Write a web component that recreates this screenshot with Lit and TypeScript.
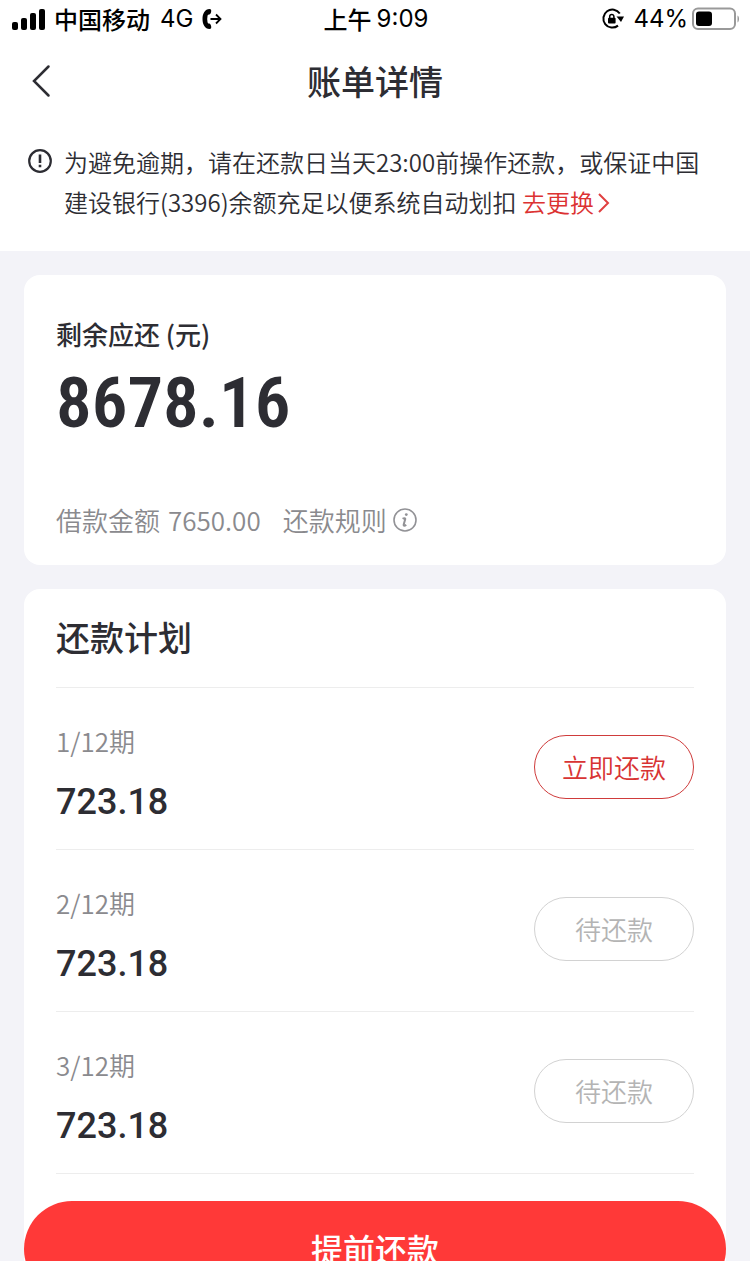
import { LitElement, html, css } from "lit";
import { customElement, property, state } from "lit/decorators.js";
import { classMap } from "lit/directives/class-map.js";

interface Installment {
  label: string;
  amount: string;
  due: boolean;
}

@customElement("status-bar")
class StatusBar extends LitElement {
  static styles = css`
    :host {
      display: block;
      color: #000;
      font-size: 24px;
      line-height: 36px;
    }
    .bar {
      display: grid;
      grid-template-columns: 1fr auto 1fr;
      align-items: center;
      height: 38px;
      padding: 0 10px 0 12px;
    }
    .side {
      display: flex;
      align-items: center;
      gap: 8px;
    }
    .carrier {
      display: flex;
      gap: 10px;
    }
    .end {
      justify-content: flex-end;
    }
    .latin {
      font-family: Inter, "Noto Sans CJK SC", sans-serif;
    }
    .strong {
      font-weight: 500;
    }
    .time {
      display: flex;
      gap: 5px;
    }
    svg {
      display: block;
      flex: none;
    }
    .battery {
      display: flex;
      align-items: center;
      gap: 4px;
    }
  `;

  render() {
    return html`
      <div class="bar">
        <div class="side">
          <svg width="34" height="22" viewBox="0 0 34 22" aria-hidden="true">
            <rect x="0" y="14" width="6" height="8" rx="2" />
            <rect x="9" y="10" width="6" height="12" rx="2" />
            <rect x="18" y="5" width="6" height="17" rx="2" />
            <rect x="27" y="1" width="6" height="21" rx="2" />
          </svg>
          <div class="carrier">
            <span class="strong">中国移动</span>
            <span class="latin">4G</span>
          </div>
          <svg width="22" height="24" viewBox="0 0 22 24" aria-hidden="true">
            <path d="M8.500 2C4 2 1.500 6.500 1.500 12s2.500 10 7 10c1.600 0 2-1.200 1.600-3C9.700 17.300 9 16.300 8 16.500c-1.200 0-1.300-.8-1.500-1.600-.4-2-.4-3.800 0-5.800C6.700 8.300 6.800 7.500 8 7.500c1 .2 1.700-.8 2.100-2.500.4-1.800 0-3-1.600-3z" />
            <path d="M9.500 12h10M15 7.500l4.500 4.500-4.500 4.500" fill="none" stroke="#000" stroke-width="1.800" />
          </svg>
        </div>
        <div class="time">
          <span class="strong">上午</span>
          <span class="latin">9:09</span>
        </div>
        <div class="side end">
          <svg width="24" height="24" viewBox="0 0 24 24" aria-hidden="true">
            <path d="M18.800 6.500A9 9 0 1 0 17 18.600" fill="none" stroke="#000" stroke-width="2" />
            <path d="M15.500 9.500H23l-3 5.500z" />
            <rect x="7" y="10.800" width="7.600" height="5.800" rx="1" />
            <path d="M8.700 11.500V9.500a2.100 2.100 0 0 1 4.200 0v2" fill="none" stroke="#000" stroke-width="1.500" />
          </svg>
          <div class="battery">
            <span class="latin">44%</span>
            <svg width="48" height="24" viewBox="0 0 48 24" aria-hidden="true">
              <rect x="1" y="1.500" width="42" height="20.500" rx="5" fill="none" stroke="#999" stroke-width="2" />
              <rect x="4" y="4.500" width="16" height="14.500" rx="3" />
              <path d="M45.500 8.500c2 .8 2 6 0 7z" fill="#999" />
            </svg>
          </div>
        </div>
      </div>
    `;
  }
}

@customElement("plan-row")
class PlanRow extends LitElement {
  @property({ attribute: false }) item!: Installment;

  static styles = css`
    :host {
      display: block;
      border-bottom: 1px solid #ededed;
    }
    .row {
      display: flex;
      justify-content: space-between;
      align-items: flex-start;
      padding: 36px 0 25px;
    }
    .info {
      display: grid;
      gap: 20px;
    }
    .label {
      color: #8a8a8e;
      font-size: 26px;
      font-weight: 350;
      line-height: 34px;
    }
    .amount {
      padding-top: 2px;
      color: #2d2d33;
      font-size: 36px;
      font-weight: 500;
      line-height: 44px;
      font-family: Roboto, sans-serif;
    }
    .action {
      box-sizing: border-box;
      width: 160px;
      height: 64px;
      margin: 11px 0 0;
      padding: 0 0 2px;
      border: 1px solid #d2d2d2;
      border-radius: 32px;
      background: #fff;
      color: #b4b4b4;
      font: inherit;
      font-size: 26px;
      font-weight: 350;
    }
    .due {
      border-color: #cf3b3b;
      color: #d83434;
    }
  `;

  render() {
    const { label, amount, due } = this.item;
    return html`
      <div class="row">
        <div class="info">
          <span class="label">${label}</span>
          <span class="amount">${amount}</span>
        </div>
        <button class=${classMap({ action: true, due })} type="button" ?disabled=${!due}>
          ${due ? "立即还款" : "待还款"}
        </button>
      </div>
    `;
  }
}

@customElement("app-root")
class AppRoot extends LitElement {
  @state() private plan: Installment[] = [
    { label: "1/12期", amount: "723.18", due: true },
    { label: "2/12期", amount: "723.18", due: false },
    { label: "3/12期", amount: "723.18", due: false },
  ];

  static styles = css`
    :host {
      display: block;
      height: 100vh;
      overflow-y: auto;
      scrollbar-width: none;
      background: #f3f3f8;
      color: #2d2d33;
      font-family: "Noto Sans CJK SC", sans-serif;
    }
    h1,
    h2,
    p {
      margin: 0;
    }
    svg {
      display: block;
      flex: none;
    }
    .top {
      background: #fff;
      padding-bottom: 29px;
    }
    .nav {
      display: grid;
      grid-template-columns: 1fr auto 1fr;
      align-items: center;
      height: 86px;
      padding: 0 24px;
    }
    .back {
      justify-self: start;
      padding: 0 8px;
      border: 0;
      background: none;
    }
    .title {
      font-size: 34px;
      font-weight: 500;
      line-height: 48px;
    }
    .notice {
      display: flex;
      gap: 12px;
      padding: 18px 48px 0 28px;
      font-size: 24px;
      font-weight: 350;
      line-height: 40px;
    }
    .alert {
      margin-top: 7px;
    }
    .change {
      color: #dc3232;
      text-decoration: none;
    }
    .chevron {
      display: inline-block;
      margin-left: 2px;
      vertical-align: -2px;
    }
    .main {
      display: grid;
      gap: 24px;
      padding: 24px 24px 0;
    }
    .card {
      border-radius: 16px;
      background: #fff;
    }
    .summary {
      padding: 40px 32px 25px;
    }
    .caption {
      font-size: 26px;
      font-weight: 500;
      line-height: 38px;
    }
    .total {
      font-family: "Roboto Condensed", Roboto, sans-serif;
      font-size: 71px;
      font-weight: 600;
      line-height: 100px;
    }
    .details {
      display: flex;
      align-items: center;
      gap: 22px;
      margin-top: 47px;
      color: #8a8a8e;
      font-size: 26px;
      font-weight: 350;
      line-height: 40px;
    }
    .principal {
      display: flex;
      gap: 8px;
    }
    .rules {
      display: flex;
      align-items: center;
      gap: 6px;
      padding: 0;
      border: 0;
      background: none;
      color: inherit;
      font: inherit;
    }
    .list {
      padding: 0 32px;
    }
    .heading {
      padding: 24px 0 26px;
      border-bottom: 1px solid #ededed;
      font-size: 34px;
      font-weight: 500;
      line-height: 48px;
    }
    .prepay {
      display: block;
      width: 100%;
      height: 96px;
      margin-top: 27px;
      padding: 0 0 2px;
      border: 0;
      border-radius: 48px;
      background: #ff3938;
      color: #fff;
      font: inherit;
      font-size: 32px;
      font-weight: 500;
    }
  `;

  render() {
    return html`
      <header class="top">
        <status-bar></status-bar>
        <nav class="nav">
          <button class="back" type="button" aria-label="返回">
            <svg width="20" height="34" viewBox="0 0 20 34">
              <path d="M16.500 2.500L2 17l14.500 14.500" fill="none" stroke="#2d2d33" stroke-width="2.500" stroke-linecap="round" />
            </svg>
          </button>
          <h1 class="title">账单详情</h1>
        </nav>
        <div class="notice">
          <svg class="alert" width="24" height="24" viewBox="0 0 24 24" aria-hidden="true">
            <circle cx="12" cy="12" r="10.800" fill="none" stroke="#2d2d33" stroke-width="2.200" />
            <path d="M12 5.500v8.500M12 15.800v2.400" stroke="#2d2d33" stroke-width="2.600" />
          </svg>
          <p>
            为避免逾期，请在还款日当天23:00前操作还款，或保证中国建设银行(3396)余额充足以便系统自动划扣
            <a class="change" href="#card"
              >去更换<svg class="chevron" width="14" height="22" viewBox="0 0 14 22" aria-hidden="true">
                <path d="M3 2l9 9-9 9" fill="none" stroke="#e04040" stroke-width="2" /></svg
            ></a>
          </p>
        </div>
      </header>
      <main class="main">
        <section class="card summary">
          <p class="caption">剩余应还 (元)</p>
          <p class="total">8678.16</p>
          <div class="details">
            <div class="principal"><span>借款金额</span><span>7650.00</span></div>
            <button class="rules" type="button">
              还款规则
              <svg width="24" height="24" viewBox="0 0 24 24" aria-hidden="true">
                <circle cx="12" cy="12" r="11" fill="none" stroke="#929296" stroke-width="1.600" />
                <circle cx="13.300" cy="6.600" r="1.400" fill="#929296" />
                <path d="M9.600 10.800c1.200-.9 2.900-1 2.600.4l-1.500 5.400c-.3 1.400 1.100 1.300 2.500.1" fill="none" stroke="#929296" stroke-width="2" />
              </svg>
            </button>
          </div>
        </section>
        <section class="card" id="card">
          <div class="list">
            <h2 class="heading">还款计划</h2>
            ${this.plan.map((item) => html`<plan-row .item=${item}></plan-row>`)}
          </div>
          <button class="prepay" type="button">提前还款</button>
        </section>
      </main>
    `;
  }
}
